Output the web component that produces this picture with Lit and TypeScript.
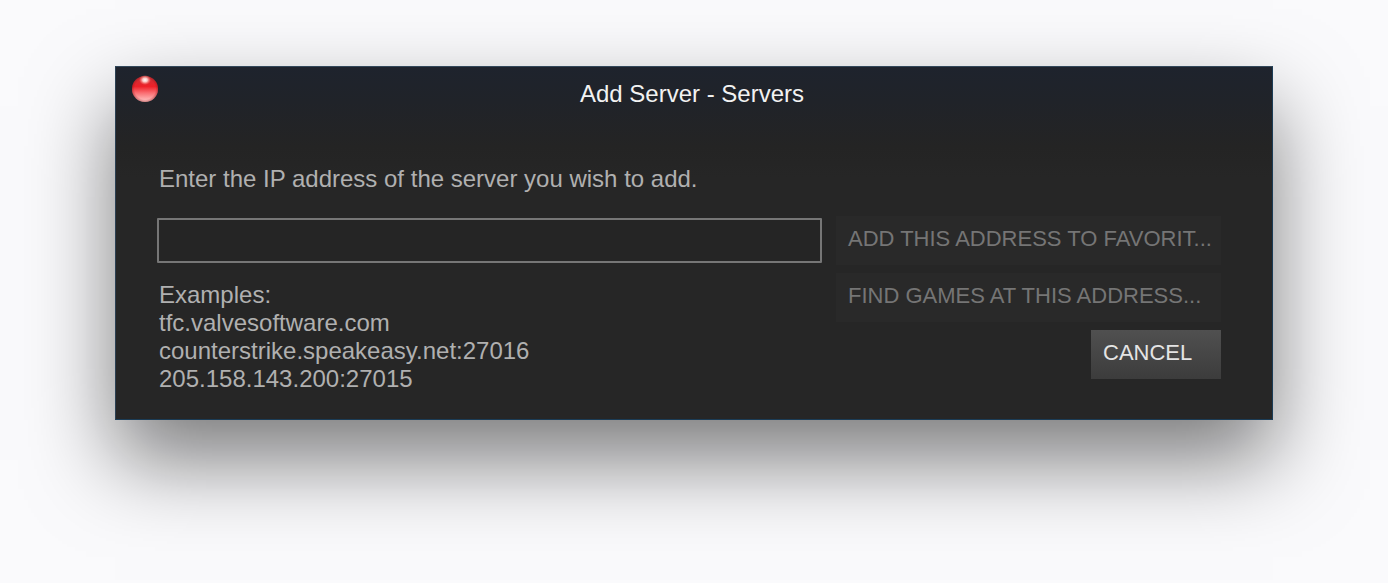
import { LitElement, html, css } from "lit";
import { customElement } from "lit/decorators.js";

@customElement("app-root")
export class AppRoot extends LitElement {
  static styles = css`
    * {
      box-sizing: border-box;
    }
    :host {
      display: block;
      min-height: 100vh;
      padding: 66px 115px 120px;
      box-sizing: border-box;
      background: #fafafc;
      font-family: "Liberation Sans", Arial, sans-serif;
      font-size: 24px;
      line-height: 28px;
      color: #b0b0b0;
    }
    .dialog {
      padding-bottom: 26px;
      border: 1px solid;
      border-color: #33485b #1b3c56 #1b3c56 #2b4053;
      background: linear-gradient(#1e232d 0, #202329 35px, #242424 80px, #262626 110px);
      box-shadow: 0 40px 80px rgba(0, 0, 0, 0.51);
    }
    .titlebar {
      display: grid;
      grid-template-columns: 26px minmax(0, 1fr) 26px;
      padding: 8px 20px 0 16px;
      color: #f2f2f2;
    }
    .title {
      margin: 0;
      padding-top: 5px;
      font: inherit;
      text-align: center;
    }
    .close {
      width: 26px;
      height: 28px;
      padding: 0;
      border: 0;
      background: none;
    }
    .close svg {
      display: block;
    }
    .body {
      padding: 57px 51px 0 41px;
    }
    .prompt {
      display: block;
      padding-left: 2px;
    }
    .columns {
      display: grid;
      grid-template-columns: minmax(0, 665fr) minmax(0, 385fr);
      gap: 14px;
      padding-top: 23px;
    }
    .entry {
      padding-top: 2px;
    }
    .address {
      display: block;
      width: 100%;
      height: 45px;
      padding: 0 8px;
      border: 2px solid #767676;
      border-radius: 1px;
      outline: 0;
      background: #252525;
      color: #d0d0d0;
      font: inherit;
    }
    .examples {
      padding: 18px 0 0 2px;
    }
    .examples p {
      margin: 0;
    }
    .actions {
      display: flex;
      flex-direction: column;
      gap: 8px;
    }
    .action {
      height: 49px;
      padding: 0 0 4px 12px;
      border: 0;
      background: #292929;
      color: #757575;
      font: inherit;
      font-size: 22px;
      text-align: left;
      white-space: nowrap;
    }
    .cancel {
      align-self: flex-end;
      width: 130px;
      background: linear-gradient(#505050, #3c3c3c);
      color: #e4e4e4;
    }
  `;

  render() {
    return html`
      <main class="dialog" role="dialog" aria-labelledby="title">
        <header class="titlebar">
          <button class="close" type="button" aria-label="Close">
            <svg width="26" height="28" viewBox="0 0 26 28" aria-hidden="true">
              <defs>
                <linearGradient id="ball" x1="0" y1="0" x2="0" y2="1">
                  <stop offset="0" stop-color="#c8343a" />
                  <stop offset="0.4" stop-color="#ee2028" />
                  <stop offset="0.65" stop-color="#fa6e72" />
                  <stop offset="1" stop-color="#ffccca" />
                </linearGradient>
                <radialGradient id="rim">
                  <stop offset="0.8" stop-color="#8a1014" stop-opacity="0" />
                  <stop offset="1" stop-color="#8a1014" stop-opacity="0.4" />
                </radialGradient>
                <radialGradient id="shine">
                  <stop offset="0" stop-color="#fff" />
                  <stop offset="0.4" stop-color="#ffd8d4" stop-opacity="0.9" />
                  <stop offset="1" stop-color="#ff8078" stop-opacity="0" />
                </radialGradient>
              </defs>
              <circle cx="13" cy="14" r="13" fill="url(#ball)" />
              <circle cx="13" cy="14" r="13" fill="url(#rim)" />
              <ellipse cx="13" cy="5" rx="6" ry="5" fill="url(#shine)" />
            </svg>
          </button>
          <h1 class="title" id="title">Add Server - Servers</h1>
        </header>
        <form class="body">
          <label class="prompt" for="address">Enter the IP address of the server you wish to add.</label>
          <div class="columns">
            <div class="entry">
              <input class="address" id="address" type="text" />
              <div class="examples">
                <p>Examples:</p>
                <p>tfc.valvesoftware.com</p>
                <p>counterstrike.speakeasy.net:27016</p>
                <p>205.158.143.200:27015</p>
              </div>
            </div>
            <div class="actions">
              <button class="action" type="button" disabled>ADD THIS ADDRESS TO FAVORIT...</button>
              <button class="action" type="button" disabled>FIND GAMES AT THIS ADDRESS...</button>
              <button class="action cancel" type="button">CANCEL</button>
            </div>
          </div>
        </form>
      </main>
    `;
  }
}
